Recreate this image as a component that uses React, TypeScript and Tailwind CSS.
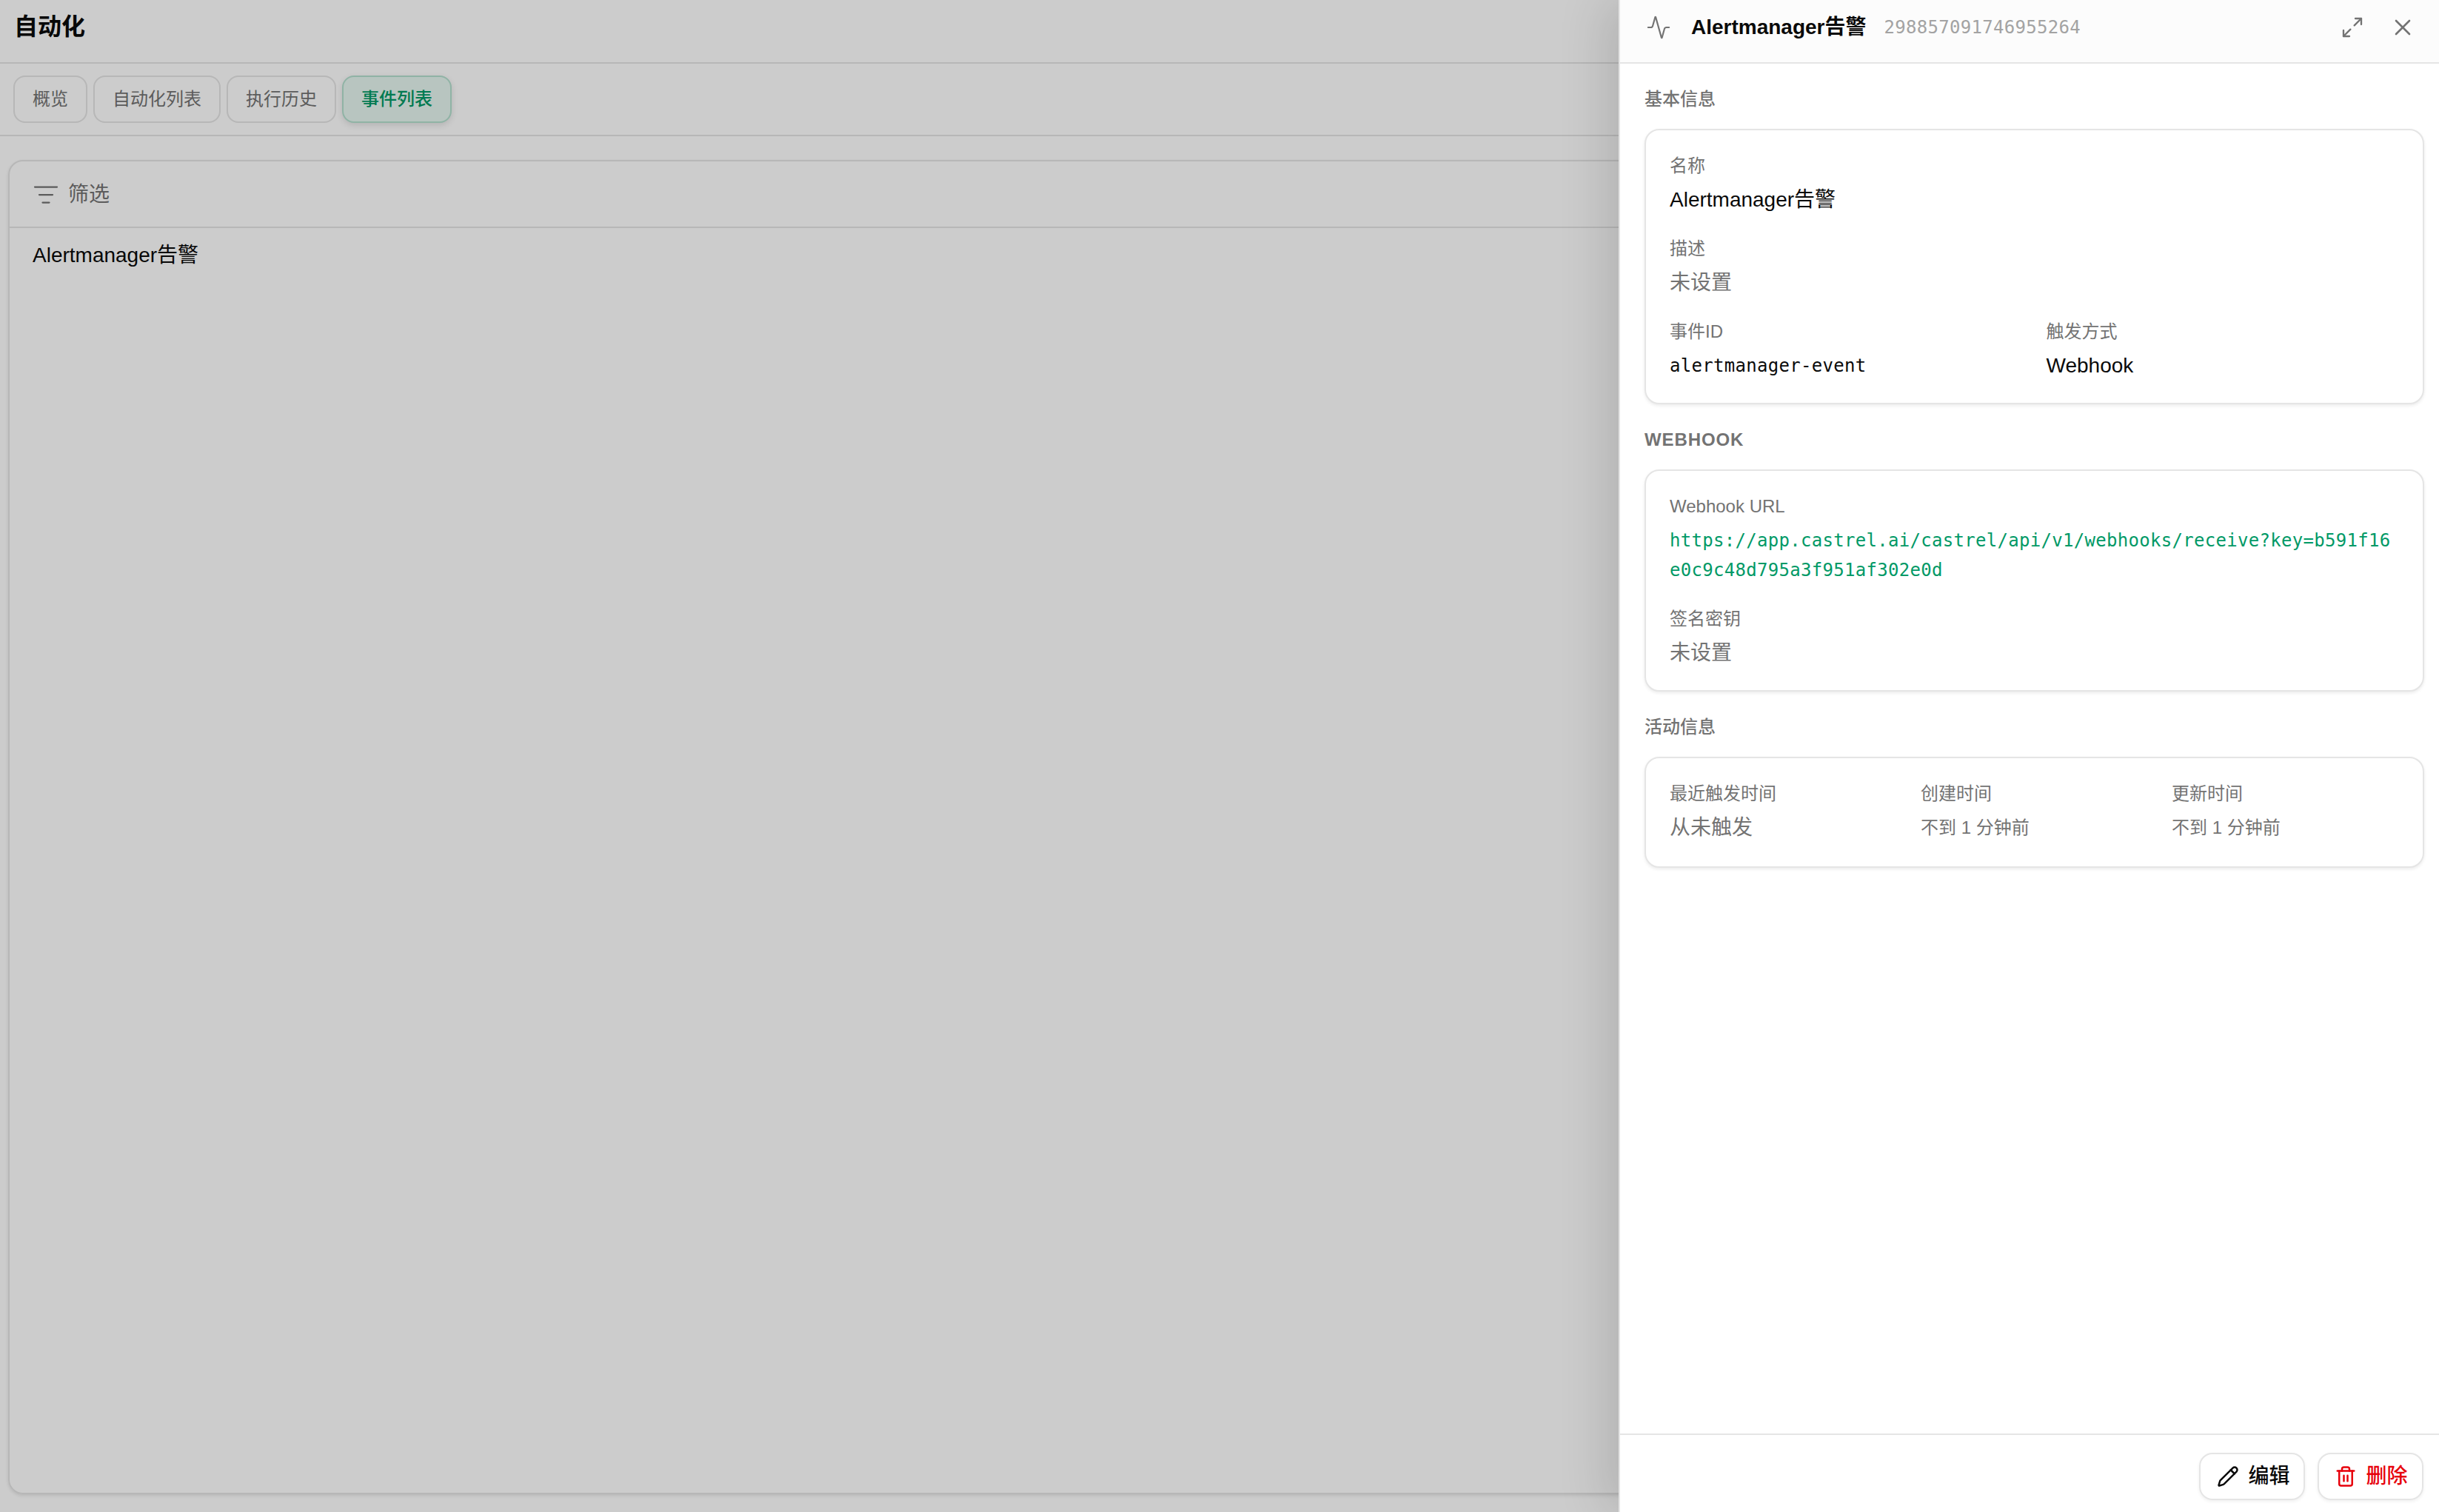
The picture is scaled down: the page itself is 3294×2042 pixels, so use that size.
import { Activity, ListFilter, Maximize2, Pencil, Trash2, X } from 'lucide-react'
import type { ReactNode } from 'react'

const mono = "font-['DejaVu_Sans_Mono',monospace] tracking-[0.3px]"

function Tab({ label, active }: { label: string; active?: boolean }) {
  return (
    <button
      className={
        active
          ? 'h-[64px] px-[24px] rounded-[16px] border-2 border-[#b4e0cf] bg-[#e6f7f0] text-[24px] font-medium text-emerald-600 shadow-[0_3px_8px_rgba(0,0,0,0.12)]'
          : 'h-[64px] px-[24px] rounded-[16px] border-2 border-[#e5e5e5] text-[24px] text-[#737373]'
      }
    >
      {label}
    </button>
  )
}

function Section({ title, className, tail, children }: { title: string; className?: string; tail?: string; children: ReactNode }) {
  return (
    <section>
      <h3 className={`text-[24px] leading-[32px] text-[#737373] ${className ?? 'font-medium'}`}>{title}</h3>
      <div className={`mt-[24px] rounded-[20px] border-2 border-[#e5e5e5] bg-white px-[32px] pt-[32px] shadow-[0_2px_4px_rgba(0,0,0,0.08)] ${tail ?? 'pb-[30px]'}`}>
        {children}
      </div>
    </section>
  )
}

function Field({ label, children }: { label: string; children: ReactNode }) {
  return (
    <div>
      <div className="text-[24px] leading-[32px] text-[#737373]">{label}</div>
      <div className="mt-[10px]">{children}</div>
    </div>
  )
}

export default function App() {
  return (
    <div className="relative h-screen overflow-hidden bg-white font-['Liberation_Sans','Noto_Sans_CJK_SC',sans-serif] text-[#0a0a0a]">
      <div className="flex h-full flex-col">
        <header className="flex h-[86px] shrink-0 items-center border-b-2 border-[#e5e5e5] px-[19px] pb-[12px]">
          <h1 className="text-[32px] font-semibold">自动化</h1>
        </header>
        <nav className="flex h-[98px] shrink-0 items-start gap-[8px] border-b-2 border-[#e5e5e5] px-[18px] pt-[16px]">
          <Tab label="概览" />
          <Tab label="自动化列表" />
          <Tab label="执行历史" />
          <Tab label="事件列表" active />
        </nav>
        <main className="flex min-h-0 flex-1 flex-col px-[11px] pt-[32px] pb-[24px]">
          <div className="flex-1 rounded-[20px] border-2 border-[#e5e5e5] shadow-[0_2px_4px_rgba(0,0,0,0.1)]">
            <div className="flex h-[90px] items-center gap-[12px] border-b-2 border-[#e5e5e5] px-[31px] pt-[2px] text-[#737373]">
              <ListFilter size={36} strokeWidth={1.5} />
              <span className="text-[28px]">筛选</span>
            </div>
            <div className="px-[31px] py-[17px] text-[28px] leading-[40px]">Alertmanager告警</div>
          </div>
        </main>
      </div>

      <div className="absolute inset-0 bg-black/20" />

      <aside className="absolute inset-y-0 right-0 flex w-[1108px] flex-col border-l-2 border-[#e5e5e5] bg-white shadow-[-20px_0_60px_rgba(0,0,0,0.12)]">
        <div className="flex h-[86px] shrink-0 items-center border-b-2 border-[#e5e5e5] bg-[#fcfcfc] pb-[11px] pl-[35px] pr-[31px]">
          <Activity size={34} strokeWidth={1.5} className="text-[#737373]" />
          <span className="ml-[27px] text-[28px] font-bold">Alertmanager告警</span>
          <span className={`ml-[24px] text-[24px] text-[#a3a3a3] ${mono}`}>298857091746955264</span>
          <Maximize2 size={32} strokeWidth={1.75} className="ml-auto text-[#737373]" />
          <X size={36} strokeWidth={1.75} className="ml-[34px] text-[#737373]" />
        </div>

        <div className="flex min-h-0 flex-1 flex-col gap-[32px] pl-[33px] pr-[20px] pt-[32px]">
          <Section title="基本信息">
            <div className="flex flex-col gap-[30px]">
              <Field label="名称">
                <div className="text-[28px] leading-[40px]">Alertmanager告警</div>
              </Field>
              <Field label="描述">
                <div className="text-[28px] leading-[40px] text-[#737373]">未设置</div>
              </Field>
              <div className="grid grid-cols-2 gap-[32px]">
                <Field label="事件ID">
                  <div className={`text-[24px] leading-[40px] ${mono}`}>alertmanager-event</div>
                </Field>
                <Field label="触发方式">
                  <div className="text-[28px] leading-[40px]">Webhook</div>
                </Field>
              </div>
            </div>
          </Section>

          <Section title="WEBHOOK" className="font-bold tracking-[0.9px]">
            <div className="flex flex-col gap-[30px]">
              <Field label="Webhook URL">
                <div className={`break-all text-[24px] leading-[40px] text-emerald-600 ${mono}`}>
                  https://app.castrel.ai/castrel/api/v1/webhooks/receive?key=b591f16e0c9c48d795a3f951af302e0d
                </div>
              </Field>
              <Field label="签名密钥">
                <div className="text-[28px] leading-[40px] text-[#737373]">未设置</div>
              </Field>
            </div>
          </Section>

          <Section title="活动信息" tail="pb-[32px]">
            <div className="grid grid-cols-3 gap-[32px]">
              <Field label="最近触发时间">
                <div className="text-[28px] leading-[40px] text-[#737373]">从未触发</div>
              </Field>
              <Field label="创建时间">
                <div className="text-[24px] leading-[40px] text-[#737373]">不到 1 分钟前</div>
              </Field>
              <Field label="更新时间">
                <div className="text-[24px] leading-[40px] text-[#737373]">不到 1 分钟前</div>
              </Field>
            </div>
          </Section>
        </div>

        <div className="flex h-[106px] shrink-0 items-start justify-end gap-[17px] border-t-2 border-[#e5e5e5] pr-[21px] pt-[24px]">
          <button className="flex h-[64px] w-[143px] items-center justify-center gap-[12px] rounded-[18px] border-2 border-[#e5e5e5] pl-[4px] text-[28px] font-medium shadow-[0_2px_4px_rgba(0,0,0,0.06)]">
            <Pencil size={30} strokeWidth={2} />
            编辑
          </button>
          <button className="flex h-[64px] w-[143px] items-center justify-center gap-[12px] rounded-[18px] border-2 border-[#e5e5e5] pl-[2px] text-[28px] font-medium text-red-600 shadow-[0_2px_4px_rgba(0,0,0,0.06)]">
            <Trash2 size={30} strokeWidth={2} />
            删除
          </button>
        </div>
      </aside>
    </div>
  )
}
